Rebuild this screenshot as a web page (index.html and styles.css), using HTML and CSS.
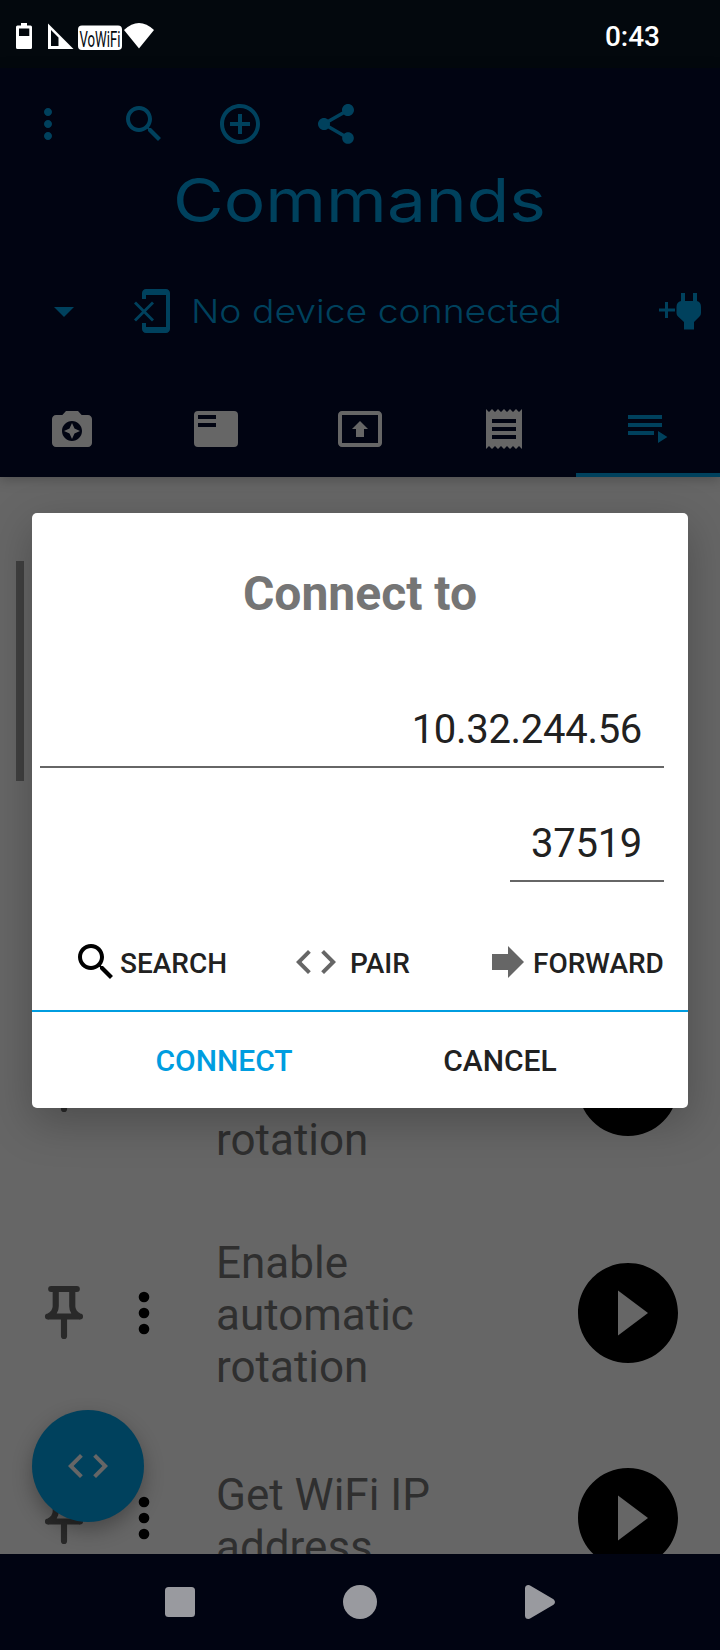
FILE: index.html
```html
<!DOCTYPE html>
<html lang="en">
<head>
    <meta charset="UTF-8">
    <meta name="viewport" content="width=device-width, initial-scale=1.0">
    <title>Commands</title>
    <link rel="stylesheet" href="styles.css">
</head>
<body>
    <div class="screen">
        <div class="status-bar">
            <svg class="status-icons" width="160" height="68" viewBox="0 0 160 68">
                <path fill-rule="evenodd" d="M21 23h6v2.500h3.500q1.500 0 1.500 1.500v20.500q0 1.500-1.500 1.500h-13q-1.500 0-1.500-1.500V27q0-1.500 1.500-1.500H21zM19 28.500V36h10.300v-7.500z"/>
                <path fill-rule="evenodd" d="M48 23.500L73.500 49H48zM51 30v16h7.500v-8.500z"/>
                <rect x="78" y="25.500" width="44" height="24.500" rx="4"/>
                <path d="M139 48.500L124 30q15-14 30 0z"/>
                <text class="vowifi" x="79.500" y="46.500" textLength="41" lengthAdjust="spacingAndGlyphs">VoWiFi</text>
            </svg>
            <span class="clock">0:43</span>
        </div>

        <div class="header">
            <div class="toolbar">
                <svg class="icon" viewBox="0 0 24 24"><path d="M12 8c1.100 0 2-.9 2-2s-.9-2-2-2-2 .9-2 2 .9 2 2 2zm0 2c-1.100 0-2 .9-2 2s.9 2 2 2 2-.9 2-2-.9-2-2-2zm0 6c-1.100 0-2 .9-2 2s.9 2 2 2 2-.9 2-2-.9-2-2-2z"/></svg>
                <svg class="icon" viewBox="0 0 24 24"><path d="M15.500 14h-.79l-.28-.27C15.410 12.590 16 11.110 16 9.500 16 5.910 13.090 3 9.500 3S3 5.910 3 9.500 5.910 16 9.500 16c1.610 0 3.090-.59 4.230-1.570l.27.28v.79l5 4.990L20.490 19l-4.990-5zm-6 0C7.010 14 5 11.990 5 9.500S7.010 5 9.500 5 14 7.010 14 9.500 11.990 14 9.500 14z"/></svg>
                <svg class="icon" viewBox="0 0 24 24"><path d="M13 7h-2v4H7v2h4v4h2v-4h4v-2h-4V7zm-1-5C6.480 2 2 6.480 2 12s4.480 10 10 10 10-4.480 10-10S17.520 2 12 2zm0 18c-4.410 0-8-3.590-8-8s3.590-8 8-8 8 3.590 8 8-3.590 8-8 8z"/></svg>
                <svg class="icon" viewBox="0 0 24 24"><path d="M18 16.080c-.76 0-1.440.3-1.960.77L8.910 12.700c.05-.23.09-.46.09-.7s-.04-.47-.09-.7l7.050-4.110c.54.5 1.250.81 2.040.81 1.660 0 3-1.340 3-3s-1.340-3-3-3-3 1.340-3 3c0 .24.04.47.09.7L8.040 9.810C7.500 9.310 6.790 9 6 9c-1.660 0-3 1.340-3 3s1.340 3 3 3c.79 0 1.500-.31 2.040-.81l7.120 4.160c-.05.21-.08.43-.08.65 0 1.610 1.310 2.920 2.920 2.920 1.610 0 2.920-1.310 2.920-2.920s-1.310-2.920-2.920-2.920z"/></svg>
            </div>
            <svg class="title" width="720" height="92" viewBox="0 0 720 92">
                <text x="173" y="64" textLength="373" lengthAdjust="spacingAndGlyphs">Commands</text>
            </svg>
            <div class="device-row">
                <svg class="icon" viewBox="0 0 24 24"><path d="M7 10l5 5 5-5z"/></svg>
                <svg class="icon" viewBox="0 0 24 24"><path d="M13 8.200l-1-1-4 4-4-4-1 1 4 4-4 4 1 1 4-4 4 4 1-1-4-4 4-4zM19 1H9c-1.100 0-2 .9-2 2v3h2V4h10v16H9v-2H7v3c0 1.100.9 2 2 2h10c1.100 0 2-.9 2-2V3c0-1.100-.9-2-2-2z"/></svg>
                <svg class="device-name" width="392" height="48" viewBox="0 0 392 48">
                    <text x="15" y="36" textLength="371" lengthAdjust="spacingAndGlyphs">No device connected</text>
                </svg>
                <svg class="plug" width="48" height="48" viewBox="0 0 48 48">
                    <path d="M3 21.500h6V15h3v6.500h7v3h-7V31H9v-6.500H3zM25 6h4v8h8V6h4v8q4 1 4 6v6q0 2-1.500 3.500L38 35v7.500H28V35l-6-5.500q-1.500-1.500-1.500-3.500v-6q0-5 4.500-6z"/>
                </svg>
            </div>
            <div class="tabs">
                <div class="tab"><svg class="icon" viewBox="0 0 24 24"><path d="M9 3L7.170 5H4c-1.100 0-2 .9-2 2v12c0 1.100.9 2 2 2h16c1.100 0 2-.9 2-2V7c0-1.100-.9-2-2-2h-3.170L15 3H9zm3 15c-2.760 0-5-2.240-5-5s2.240-5 5-5 5 2.240 5 5-2.240 5-5 5z"/><path d="M12 17l1.250-2.750L16 13l-2.750-1.250L12 9l-1.250 2.750L8 13l2.750 1.250z"/></svg></div>
                <div class="tab"><svg class="icon" viewBox="0 0 24 24"><path fill-rule="evenodd" d="M3 3h18q2 0 2 2v14q0 2-2 2H3q-2 0-2-2V5q0-2 2-2zM3 5v2h9V5zM3 9v2h9V9z"/></svg></div>
                <div class="tab"><svg class="icon" viewBox="0 0 24 24"><path d="M21 3H3c-1.110 0-2 .89-2 2v14c0 1.110.89 2 2 2h18c1.110 0 2-.89 2-2V5c0-1.110-.89-2-2-2zm0 16.020H3V4.980h18v14.040zM10 12H8l4-4 4 4h-2v4h-4v-4z"/></svg></div>
                <div class="tab"><svg class="icon" viewBox="0 0 24 24"><path d="M18 17H6v-2h12v2zm0-4H6v-2h12v2zm0-4H6V7h12v2zM3 22l1.500-1.500L6 22l1.500-1.500L9 22l1.500-1.500L12 22l1.500-1.500L15 22l1.500-1.500L18 22l1.500-1.500L21 22V2l-1.500 1.500L18 2l-1.500 1.500L15 2l-1.500 1.500L12 2l-1.500 1.500L9 2 7.500 3.500 6 2 4.500 3.500 3 2v20z"/></svg></div>
                <div class="tab active"><svg class="icon" viewBox="0 0 24 24"><path d="M2 5h17v2H2zM2 9h17v2H2zM2 13h13v2H2zM17 13v6l4.700-3z"/></svg></div>
            </div>
        </div>

        <div class="list">
            <div class="scrollbar"></div>
            <div class="row">
                <svg class="pin" viewBox="0 0 24 24"><path d="M7.200 3h9.600M8.900 3v6.500q0 2.500-2.700 3.800M15.100 3v6.500q0 2.500 2.700 3.800M6 13.300h12M12 13.300v7.300"/></svg>
                <svg class="more" viewBox="0 0 24 24"><circle cx="12" cy="6" r="2"/><circle cx="12" cy="12" r="2"/><circle cx="12" cy="18" r="2"/></svg>
                <div class="command last-line">rotation</div>
                <svg class="play" viewBox="0 0 24 24"><path d="M12 2C6.480 2 2 6.480 2 12s4.480 10 10 10 10-4.480 10-10S17.520 2 12 2zm-2 14.500v-9l6 4.500-6 4.500z"/></svg>
            </div>
            <div class="row">
                <svg class="pin" viewBox="0 0 24 24"><path d="M7.200 3h9.600M8.900 3v6.500q0 2.500-2.700 3.800M15.100 3v6.500q0 2.500 2.700 3.800M6 13.300h12M12 13.300v7.300"/></svg>
                <svg class="more" viewBox="0 0 24 24"><circle cx="12" cy="6" r="2"/><circle cx="12" cy="12" r="2"/><circle cx="12" cy="18" r="2"/></svg>
                <div class="command">Enable automatic rotation</div>
                <svg class="play" viewBox="0 0 24 24"><path d="M12 2C6.480 2 2 6.480 2 12s4.480 10 10 10 10-4.480 10-10S17.520 2 12 2zm-2 14.500v-9l6 4.500-6 4.500z"/></svg>
            </div>
            <div class="row short">
                <svg class="pin" viewBox="0 0 24 24"><path d="M7.200 3h9.600M8.900 3v6.500q0 2.500-2.700 3.800M15.100 3v6.500q0 2.500 2.700 3.800M6 13.300h12M12 13.300v7.300"/></svg>
                <svg class="more" viewBox="0 0 24 24"><circle cx="12" cy="6" r="2"/><circle cx="12" cy="12" r="2"/><circle cx="12" cy="18" r="2"/></svg>
                <div class="command">Get WiFi IP address</div>
                <svg class="play" viewBox="0 0 24 24"><path d="M12 2C6.480 2 2 6.480 2 12s4.480 10 10 10 10-4.480 10-10S17.520 2 12 2zm-2 14.500v-9l6 4.500-6 4.500z"/></svg>
            </div>
            <div class="fab">
                <svg class="icon" viewBox="0 0 24 24"><path d="M9.400 16.600L4.800 12l4.600-4.600L8 6l-6 6 6 6 1.400-1.400zm5.200 0l4.600-4.600-4.600-4.600L16 6l6 6-6 6-1.400-1.400z"/></svg>
            </div>
        </div>

        <div class="nav-bar">
            <svg width="40" height="40" viewBox="0 0 40 40"><rect x="5" y="5" width="30" height="30" rx="3.500"/></svg>
            <svg width="40" height="40" viewBox="0 0 40 40"><circle cx="20" cy="20" r="17"/></svg>
            <svg width="40" height="40" viewBox="0 0 40 40"><path d="M5 6.500Q5 3 8.500 3q1 0 2 .7l23 13.500q3 2.800 0 5.600l-23 13.500q-1 .7-2 .7Q5 37 5 33.500z"/></svg>
        </div>

        <div class="dialog">
            <h1>Connect to</h1>
            <div class="field">10.32.244.56</div>
            <div class="field port">37519</div>
            <div class="options">
                <div class="option search">
                    <svg class="icon" viewBox="0 0 24 24"><path d="M15.500 14h-.79l-.28-.27C15.410 12.590 16 11.110 16 9.500 16 5.910 13.090 3 9.500 3S3 5.910 3 9.500 5.910 16 9.500 16c1.610 0 3.090-.59 4.230-1.570l.27.28v.79l5 4.990L20.490 19l-4.990-5zm-6 0C7.010 14 5 11.990 5 9.500S7.010 5 9.500 5 14 7.010 14 9.500 11.990 14 9.500 14z"/></svg>
                    <span>SEARCH</span>
                </div>
                <div class="option pair">
                    <svg class="icon" viewBox="0 0 24 24"><path d="M9.400 16.600L4.800 12l4.600-4.600L8 6l-6 6 6 6 1.400-1.400zm5.200 0l4.600-4.600-4.600-4.600L16 6l6 6-6 6-1.400-1.400z"/></svg>
                    <span>PAIR</span>
                </div>
                <div class="option forward">
                    <svg class="icon" viewBox="0 0 24 24"><path d="M12 8V4l8 8-8 8v-4H4V8z"/></svg>
                    <span>FORWARD</span>
                </div>
            </div>
            <div class="actions">
                <div class="action connect">CONNECT</div>
                <div class="action">CANCEL</div>
            </div>
        </div>
    </div>
</body>
</html>
```
FILE: styles.css
```css
* {
    box-sizing: border-box;
}
body {
    margin: 0;
    font-family: Roboto, sans-serif;
}
svg {
    display: block;
    flex-shrink: 0;
}
.screen {
    position: relative;
    display: flex;
    flex-direction: column;
    width: 720px;
    height: 1650px;
    overflow: hidden;
    background: #666;
}
.icon {
    width: 48px;
    height: 48px;
    fill: currentColor;
}

/* status bar */
.status-bar {
    display: flex;
    justify-content: space-between;
    height: 68px;
    padding-right: 60px;
    background: #03080d;
    color: #fff;
}
.status-icons {
    fill: #fff;
}
.vowifi {
    font-size: 22px;
    fill: #03080d;
}
.clock {
    font-size: 28px;
    font-weight: 500;
    line-height: 74px;
}

/* header */
.header {
    height: 409px;
    background: #010412;
    color: #00415d;
    box-shadow: 0 2px 12px rgba(0, 0, 0, 0.25);
    z-index: 1;
}
.toolbar {
    display: flex;
    gap: 48px;
    padding: 32px 24px 10px;
}
.title, .device-name {
    font-family: Inter, "DejaVu Sans", sans-serif;
    fill: currentColor;
}
.title {
    font-size: 60px;
}
.device-name {
    font-size: 33px;
    font-weight: 300;
}
.device-row {
    display: flex;
    align-items: center;
    height: 120px;
    padding: 2px 16px 0 40px;
}
.device-row .icon + .icon {
    margin-left: 40px;
}
.device-row .plug {
    margin-left: auto;
    fill: currentColor;
}
.tabs {
    display: flex;
    height: 107px;
}
.tab {
    display: flex;
    flex: 1;
    justify-content: center;
    padding-top: 35px;
    color: #666;
}
.tab.active {
    color: #00415d;
    border-bottom: 4px solid #00415d;
}

/* command list */
.list {
    position: relative;
    flex: 1;
    padding-top: 495px;
    overflow: hidden;
}
.scrollbar {
    position: absolute;
    left: 16px;
    top: 84px;
    width: 8px;
    height: 220px;
    background: #404040;
}
.row {
    display: flex;
    align-items: center;
    height: 227px;
    padding: 0 32px;
}
.row.short {
    height: 183px;
}
.pin, .more {
    width: 64px;
    height: 64px;
}
.pin {
    fill: none;
    stroke: #292929;
    stroke-width: 2.3;
    stroke-linecap: round;
}
.more {
    margin-left: 16px;
}
.command {
    width: 256px;
    margin-left: 40px;
    padding-top: 4px;
    font-size: 44px;
    line-height: 52px;
    color: #2f2f2f;
}
.command.last-line {
    align-self: flex-end;
    margin-bottom: 33px;
}
.short .command {
    padding-top: 7px;
}
.play {
    width: 120px;
    height: 120px;
    margin-left: auto;
}
.fab {
    position: absolute;
    left: 32px;
    bottom: 32px;
    display: flex;
    align-items: center;
    justify-content: center;
    width: 112px;
    height: 112px;
    border-radius: 50%;
    background: #00415d;
    color: #666;
    box-shadow: 0 8px 20px rgba(0, 0, 0, 0.3);
}

/* navigation bar */
.nav-bar {
    display: flex;
    align-items: center;
    justify-content: center;
    gap: 140px;
    height: 96px;
    background: #010412;
    fill: #999a9f;
}

/* dialog */
.dialog {
    position: absolute;
    left: 32px;
    top: 513px;
    z-index: 2;
    width: 656px;
    height: 595px;
    border-radius: 5px;
    background: #fff;
    color: #212121;
    box-shadow: 0 14px 44px rgba(0, 0, 0, 0.25);
}
.dialog h1 {
    margin: 0;
    padding-top: 53px;
    font-size: 48px;
    line-height: 56px;
    text-align: center;
    color: #757575;
}
.field {
    height: 71px;
    margin: 75px 24px 0 8px;
    padding-right: 22px;
    border-bottom: 2px solid #666;
    font-size: 40px;
    letter-spacing: -0.3px;
    line-height: 66px;
    text-align: right;
}
.field.port {
    width: 154px;
    margin: 43px 24px 0 auto;
}
.options {
    display: flex;
    height: 130px;
    padding: 56px 0 0 40px;
    border-bottom: 2px solid #009de0;
}
.option {
    display: flex;
    font-size: 28px;
    font-weight: 500;
    line-height: 52px;
}
.option .icon {
    color: #666;
}
.search {
    width: 220px;
}
.search .icon {
    color: #000;
}
.pair {
    width: 192px;
}
.pair span {
    margin-left: 10px;
}
.forward span {
    margin-left: 1px;
}
.actions {
    display: flex;
    padding: 0 32px;
}
.action {
    width: 296px;
    padding-right: 16px;
    font-size: 30px;
    font-weight: 500;
    line-height: 97px;
    text-align: center;
}
.action.connect {
    padding: 0 0 0 24px;
    color: #009de0;
}
```
